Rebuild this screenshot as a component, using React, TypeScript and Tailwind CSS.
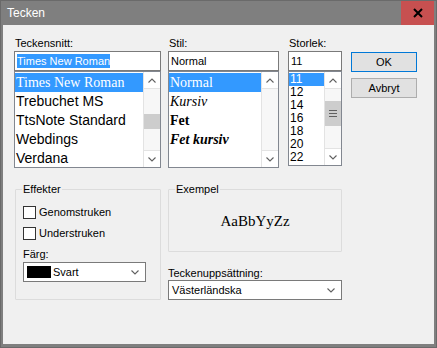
// Tecken (font picker) dialog, Windows 10 look
const ui = "font-['Liberation_Sans',Arial,sans-serif]";
const serif = "font-['Liberation_Serif','Times_New_Roman',serif]";

function Chevron({ up = false }: { up?: boolean }) {
  return (
    <svg width="8" height="5" viewBox="0 0 8 5">
      <polyline
        points={up ? "0.5,4.5 4,1 7.5,4.5" : "0.5,0.5 4,4 7.5,0.5"}
        fill="none"
        stroke="#606060"
        strokeWidth="1.1"
      />
    </svg>
  );
}

function ScrollBar({ thumbTop, thumbH, grip = false }: { thumbTop: number; thumbH: number; grip?: boolean }) {
  return (
    <div className="w-[17px] h-full flex flex-col bg-[#f7f7f7] border-l border-[#e3e3e3] shrink-0">
      <div className="h-[17px] flex items-center justify-center border-b border-[#e3e3e3] bg-white">
        <Chevron up />
      </div>
      <div className="flex-1 flex flex-col">
        <div style={{ height: thumbTop }} />
        <div
          className="bg-[#cdcdcd] flex flex-col items-center justify-center gap-[2px]"
          style={{ height: thumbH }}
        >
          {grip && (
            <>
              <div className="w-[8px] h-px bg-[#606060]" />
              <div className="w-[8px] h-px bg-[#606060]" />
              <div className="w-[8px] h-px bg-[#606060]" />
            </>
          )}
        </div>
      </div>
      <div className="h-[17px] flex items-center justify-center border-t border-[#e3e3e3] bg-white">
        <Chevron />
      </div>
    </div>
  );
}

function Label({ children }: { children: React.ReactNode }) {
  return <div className="h-[15px] leading-[15px] text-[11px] text-black pl-px">{children}</div>;
}

function Dropdown({ children, width }: { children: React.ReactNode; width: string }) {
  return (
    <div className={`${width} h-[20px] bg-white border border-[#7a7a7a] flex items-center pl-[3px] pr-[6px]`}>
      <div className="flex-1 flex items-center gap-[2px] text-[11px] text-black">{children}</div>
      <Chevron />
    </div>
  );
}

export default function App() {
  const fonts = [
    { name: "Times New Roman", cls: serif },
    { name: "Trebuchet MS", cls: ui },
    { name: "TtsNote Standard", cls: ui },
    { name: "Webdings", cls: ui },
    { name: "Verdana", cls: ui },
  ];
  const styles = [
    { name: "Normal", cls: "" },
    { name: "Kursiv", cls: "italic" },
    { name: "Fet", cls: "font-bold" },
    { name: "Fet kursiv", cls: "font-bold italic" },
  ];
  const sizes = ["11", "12", "14", "16", "18", "20", "22"];

  return (
    <div className={`${ui} w-[437px] h-[348px] bg-[#7f7f7f] flex flex-col px-[2px] pb-[3px] border border-[#6a6a6a]`}>
      {/* Title bar */}
      <div className="h-[24px] flex items-start justify-between shrink-0">
        <span className="text-white text-[12px] leading-[24px] pl-[4px]">Tecken</span>
        <div className="w-[33px] h-[24px] bg-[#c75050] flex items-center justify-center">
          <svg width="10" height="10" viewBox="0 0 10 10">
            <path d="M1 1 L9 9 M9 1 L1 9" stroke="#000" strokeWidth="2" />
          </svg>
        </div>
      </div>

      {/* Client area */}
      <div className="flex-1 bg-[#f0f0f0] pt-[11px] pl-[11px]">
        <div className="flex items-start">
          {/* Teckensnitt */}
          <div className="w-[147px] flex flex-col">
            <Label>Teckensnitt:</Label>
            <div className="h-[20px] bg-white border border-[#7a7a7a] flex items-center pl-[2px]">
              <span className="bg-[#3399ff] text-white text-[11px] leading-[14px]">Times New Roman</span>
            </div>
            <div className="h-[97px] bg-white border border-[#828790] flex overflow-hidden">
              <div className="flex-1 pt-px">
                {fonts.map((f, i) => (
                  <div
                    key={f.name}
                    className={`${f.cls} h-[19px] leading-[19px] text-[14px] pl-px whitespace-nowrap ${
                      i === 0 ? "bg-[#3399ff] text-white" : "text-black"
                    }`}
                  >
                    {f.name}
                  </div>
                ))}
              </div>
              <ScrollBar thumbTop={25} thumbH={15} />
            </div>
          </div>

          {/* Stil */}
          <div className="w-[111px] ml-[7px] flex flex-col">
            <Label>Stil:</Label>
            <div className="h-[20px] bg-white border border-[#7a7a7a] flex items-center pl-[2px] text-[11px] text-black">
              Normal
            </div>
            <div className="h-[97px] bg-white border border-[#828790] flex overflow-hidden">
              <div className="flex-1 pt-px">
                {styles.map((s, i) => (
                  <div
                    key={s.name}
                    className={`${serif} ${s.cls} h-[19px] leading-[19px] text-[14px] pl-px ${
                      i === 0 ? "bg-[#3399ff] text-white" : "text-black"
                    }`}
                  >
                    {s.name}
                  </div>
                ))}
              </div>
              <ScrollBar thumbTop={0} thumbH={0} />
            </div>
          </div>

          {/* Storlek */}
          <div className="w-[54px] ml-[9px] flex flex-col">
            <Label>Storlek:</Label>
            <div className="h-[20px] bg-white border border-[#7a7a7a] flex items-center pl-[2px] text-[11px] text-black">
              11
            </div>
            <div className="h-[95px] bg-white border border-[#828790] flex overflow-hidden">
              <div className="flex-1 pt-px">
                {sizes.map((s, i) => (
                  <div
                    key={s}
                    className={`h-[13px] leading-[13px] text-[12px] pl-px ${
                      i === 0 ? "bg-[#3399ff] text-white" : "text-black"
                    }`}
                  >
                    {s}
                  </div>
                ))}
              </div>
              <ScrollBar thumbTop={12} thumbH={25} grip />
            </div>
          </div>

          {/* Buttons */}
          <div className="w-[66px] ml-[9px] mt-[16px] flex flex-col gap-[6px]">
            <div className="h-[20px] bg-[#e1e1e1] border border-[#0078d7] flex items-center justify-center text-[11px] text-black">
              OK
            </div>
            <div className="h-[20px] bg-[#e1e1e1] border border-[#adadad] flex items-center justify-center text-[11px] text-black">
              Avbryt
            </div>
          </div>
        </div>

        {/* Lower row */}
        <div className="flex items-start mt-[15px]">
          <fieldset className="w-[146px] h-[117px] ml-px border border-[#dcdcdc] rounded-[1px]">
            <legend className="ml-[6px] px-px text-[11px] leading-[13px] text-black">Effekter</legend>
            <div className="pl-[7px] pt-[10px] flex flex-col">
              <div className="flex items-center gap-[3px] h-[13px]">
                <div className="w-[13px] h-[13px] bg-white border border-[#333333]" />
                <span className="text-[11px] text-black">Genomstruken</span>
              </div>
              <div className="flex items-center gap-[3px] h-[13px] mt-[8px]">
                <div className="w-[13px] h-[13px] bg-white border border-[#333333]" />
                <span className="text-[11px] text-black">Understruken</span>
              </div>
              <div className="mt-[7px] h-[15px] leading-[15px] text-[11px] text-black">Färg:</div>
              <Dropdown width="w-[123px]">
                <div className="w-[24px] h-[12px] bg-black" />
                <span>Svart</span>
              </Dropdown>
            </div>
          </fieldset>

          <div className="w-[174px] ml-[7px] flex flex-col">
            <fieldset className="h-[69px] border border-[#dcdcdc] rounded-[1px]">
              <legend className="ml-[6px] px-px text-[11px] leading-[13px] text-black">Exempel</legend>
              <div className={`${serif} h-[50px] flex items-center justify-center text-[15px] text-black`}>
                AaBbYyZz
              </div>
            </fieldset>
            <div className="mt-[15px] h-[13px] leading-[13px] text-[11px] text-black">Teckenuppsättning:</div>
            <Dropdown width="w-[174px]">
              <span>Västerländska</span>
            </Dropdown>
          </div>
        </div>
      </div>
    </div>
  );
}
